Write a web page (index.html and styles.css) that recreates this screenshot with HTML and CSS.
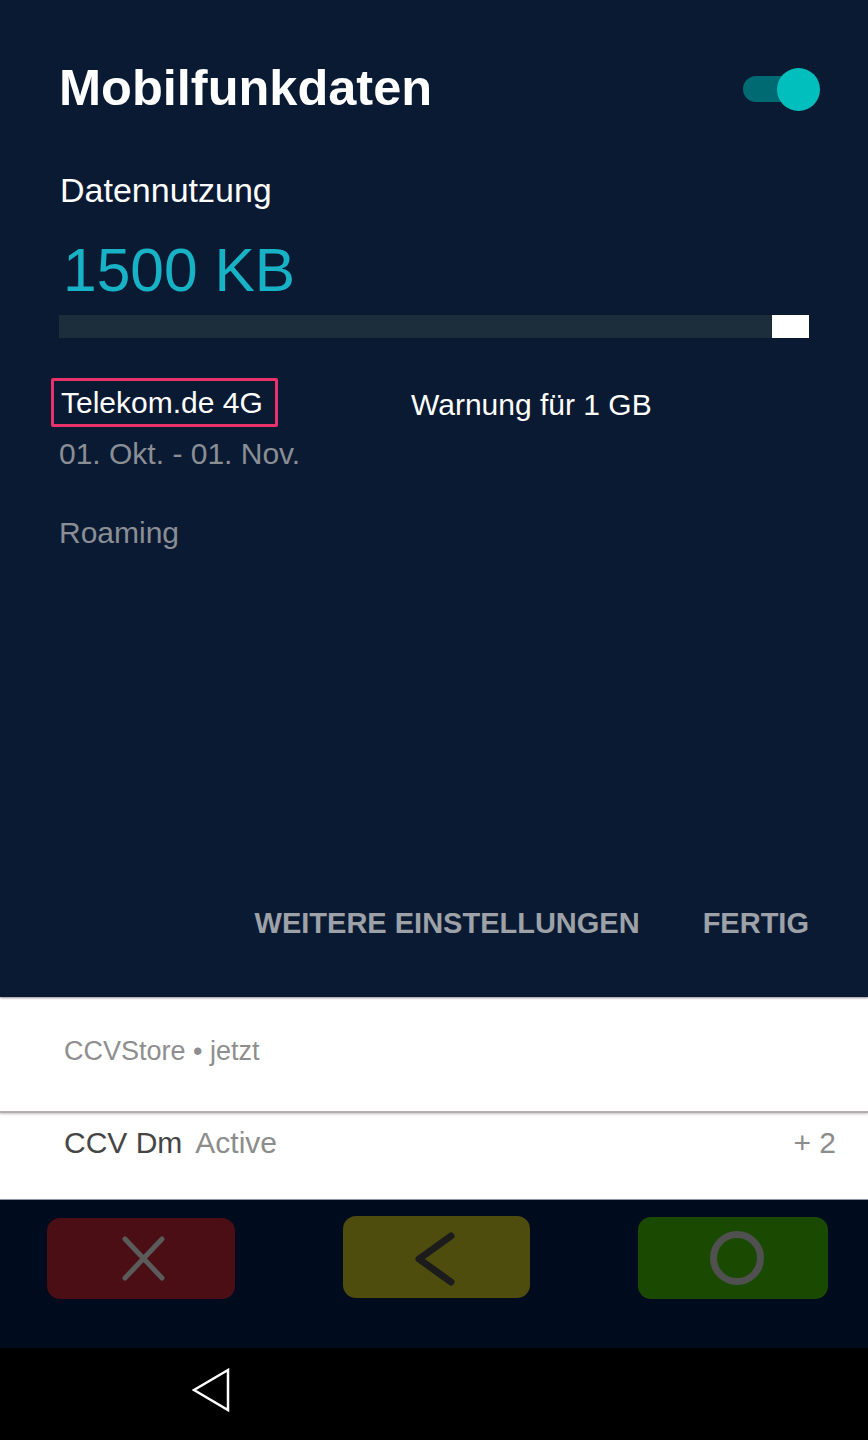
FILE: index.html
```html
<!DOCTYPE html>
<html lang="de">
<head>
<meta charset="utf-8">
<title>Mobilfunkdaten</title>
<link rel="stylesheet" href="styles.css">
</head>
<body>
<div class="screen">
  <section class="panel">
    <div class="title-row">
      <h1 class="title">Mobilfunkdaten</h1>
      <div class="toggle"><span class="track"></span><span class="thumb"></span></div>
    </div>
    <div class="label">Datennutzung</div>
    <div class="usage">1500 KB</div>
    <div class="bar"><span class="bar-fill"></span></div>
    <div class="info-row">
      <div class="carrier">Telekom.de 4G</div>
      <div class="warning">Warnung für 1 GB</div>
    </div>
    <div class="period">01. Okt. - 01. Nov.</div>
    <div class="roaming">Roaming</div>
    <div class="actions">
      <span class="action">WEITERE EINSTELLUNGEN</span>
      <span class="action">FERTIG</span>
    </div>
  </section>
  <section class="notif">
    <div class="notif-head">CCVStore • jetzt</div>
  </section>
  <section class="notif2">
    <div class="notif-line"><span class="app">CCV Dm</span><span class="state">Active</span></div>
    <span class="more">+ 2</span>
  </section>
  <section class="keys">
    <div class="key key-red">
      <svg width="188" height="81" viewBox="0 0 188 81"><path d="M78 21 L115 60 M115 21 L78 60" stroke="#5b5b5b" stroke-width="5" stroke-linecap="round" fill="none"/></svg>
    </div>
    <div class="key key-yellow">
      <svg width="187" height="82" viewBox="0 0 187 82"><path d="M108 20 L76 43 L108 66" stroke="#1c1c1c" stroke-width="7" stroke-linecap="round" stroke-linejoin="round" fill="none"/></svg>
    </div>
    <div class="key key-green">
      <svg width="190" height="82" viewBox="0 0 190 82"><circle cx="99" cy="41" r="23.5" stroke="#505050" stroke-width="7" fill="none"/></svg>
    </div>
  </section>
  <nav class="navbar">
    <svg class="back" width="40" height="46" viewBox="0 0 40 46"><path d="M36 2 L2 22 L36 42 Z" stroke="#ffffff" stroke-width="2.5" stroke-linejoin="miter" fill="none"/></svg>
  </nav>
</div>
</body>
</html>
```
FILE: styles.css
```css
* { box-sizing: border-box; }
html, body { margin: 0; padding: 0; background: #000; }
body { font-family: "Liberation Sans", Arial, sans-serif; }
.screen { width: 868px; height: 1440px; display: flex; flex-direction: column; overflow: hidden; }

.panel {
  height: 997px;
  background: #0b1a33;
  padding: 58px 59px 54px 59px;
  display: flex;
  flex-direction: column;
  position: relative;
  z-index: 2;
  box-shadow: 0 1px 2px rgba(0,0,0,0.45);
}
.title-row { display: flex; align-items: center; justify-content: space-between; height: 60px; }
.title { margin: 0; font-size: 50.5px; line-height: 60px; font-weight: bold; color: #ffffff; }
.toggle { display: flex; align-items: center; margin-right: -11px; margin-top: 2px; }
.track { width: 57px; height: 26px; border-radius: 13px; background: #006a73; }
.thumb { width: 43px; height: 43px; border-radius: 50%; background: #00bfbd; margin-left: -23px; }

.label { margin-top: 52px; margin-left: 1px; font-size: 34px; line-height: 40px; color: #ffffff; }
.usage { margin-top: 25px; margin-left: 4px; font-size: 60.5px; line-height: 70px; color: #17b2c6; }
.bar { margin-top: 10px; height: 23px; background: #1c2d3c; display: flex; justify-content: flex-end; }
.bar-fill { width: 37px; height: 23px; background: #ffffff; box-shadow: 0 0 1px rgba(0,0,0,0.6); }

.info-row { margin-top: 40px; display: grid; grid-template-columns: 352px 1fr; align-items: start; }
.carrier {
  justify-self: start;
  margin-left: -8px;
  border: 3px solid #e8326a;
  border-radius: 2px;
  padding: 0 12px 0 7px;
  font-size: 30px;
  line-height: 43px;
  color: #ffffff;
}
.warning { padding-top: 5px; font-size: 30px; line-height: 43px; color: #ffffff; }
.period { margin-top: 9px; font-size: 30px; line-height: 36px; color: #8a8e95; }
.roaming { margin-top: 43px; font-size: 30px; line-height: 36px; color: #8a8e95; }

.actions { margin-top: auto; display: flex; justify-content: flex-end; gap: 63px; }
.action { font-size: 29px; line-height: 40px; font-weight: bold; color: #9da2a9; }

.notif { height: 116px; background: #ffffff; padding: 39px 0 0 64px; border-bottom: 2px solid #b3aeab; box-shadow: 0 1px 2px rgba(0,0,0,0.25); position: relative; z-index: 1; }
.notif-head { font-size: 27px; line-height: 30px; color: #8e8e8e; }
.notif2 { height: 87px; background: #ffffff; padding: 12px 32px 0 64px; display: flex; justify-content: space-between; align-items: baseline; border-bottom: 1px solid #8c95a3; }
.notif-line { display: flex; gap: 13px; align-items: baseline; font-size: 30px; line-height: 36px; }
.app { color: #454545; }
.state { color: #8c8c8c; }
.more { font-size: 30px; line-height: 36px; color: #8c8c8c; }

.keys { height: 148px; background: #000b1e; padding: 16px 40px 0 47px; display: flex; justify-content: space-between; align-items: flex-start; }
.key { border-radius: 13px; display: flex; }
.key-red { width: 188px; height: 81px; background: #4a0e14; margin-top: 2px; }
.key-yellow { width: 187px; height: 82px; background: #4e4d0e; }
.key-green { width: 190px; height: 82px; background: #1a4a02; margin-top: 1px; }

.navbar { height: 92px; background: #000000; padding: 20px 0 0 192px; }
.back { display: block; }
```
